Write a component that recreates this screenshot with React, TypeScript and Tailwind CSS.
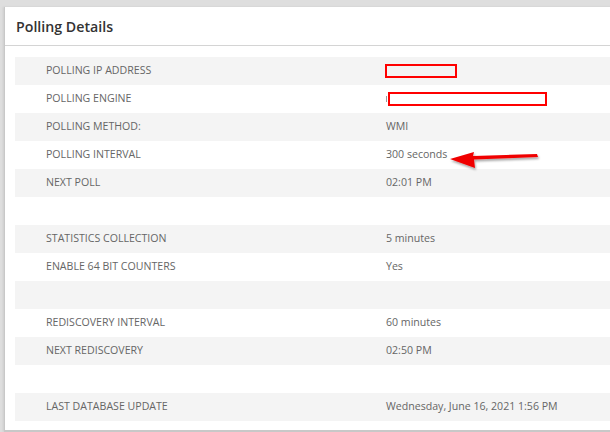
import React from 'react';

type Row = { label: string; value?: React.ReactNode };

const RedBox: React.FC<{ w: number; offset?: number }> = ({ w, offset = 0 }) => (
  <span className="relative inline-block h-[14px]" style={{ width: w, marginLeft: offset }}>
    <span className="absolute inset-0 border-2 border-[#ff0000]" />
  </span>
);

const Arrow: React.FC = () => (
  <svg className="absolute left-[444px] top-[147px]" width="100" height="26" viewBox="0 0 100 26">
    <defs>
      <filter id="sh" x="-10%" y="-30%" width="120%" height="180%">
        <feDropShadow dx="1" dy="2" stdDeviation="1.2" floodColor="#000" floodOpacity="0.35" />
      </filter>
    </defs>
    <path
      d="M6 12 L30 5 L29 9 L93 7 L94 10 L30 12.5 L31 21 Z"
      fill="#f00000"
      filter="url(#sh)"
    />
  </svg>
);

const rows: Row[] = [
  { label: 'POLLING IP ADDRESS', value: <RedBox w={72} offset={-1} /> },
  {
    label: 'POLLING ENGINE',
    value: (
      <span className="flex items-center">
        <span className="inline-block h-[6px] w-[1px] bg-[#999]" />
        <RedBox w={159} offset={1} />
      </span>
    ),
  },
  { label: 'POLLING METHOD:', value: 'WMI' },
  { label: 'POLLING INTERVAL', value: '300 seconds' },
  { label: 'NEXT POLL', value: '02:01 PM' },
  { label: '' },
  { label: 'STATISTICS COLLECTION', value: '5 minutes' },
  { label: 'ENABLE 64 BIT COUNTERS', value: 'Yes' },
  { label: '' },
  { label: 'REDISCOVERY INTERVAL', value: '60 minutes' },
  { label: 'NEXT REDISCOVERY', value: '02:50 PM' },
  { label: '' },
  { label: 'LAST DATABASE UPDATE', value: 'Wednesday, June 16, 2021 1:56 PM' },
];

export default function App() {
  return (
    <div
      className="relative h-[432px] w-[610px] overflow-hidden bg-[#dedede] pt-[7px] pl-[4px]"
      style={{ fontFamily: '"Open Sans", "Noto Sans", sans-serif' }}
    >
      <div className="w-[640px] border-b-2 border-l border-[#c8c8c8] bg-white pb-[9px] shadow-[-1px_0_2px_rgba(0,0,0,0.08)]">
        <div className="flex h-[39px] items-center border-b border-[#d4d4d4] pl-[11px] pt-[1px]">
          <h2 className="text-[14.2px] font-semibold text-[#333]">Polling Details</h2>
        </div>
        <div className="pl-[10px] pt-[11px]">
          {rows.map((r, i) => (
            <div
              key={i}
              className={`grid h-[28px] grid-cols-[371px_1fr] items-center text-[10.6px] text-[#666] ${
                i % 2 === 0 ? 'bg-[#f4f4f4]' : 'bg-white'
              }`}
            >
              <div className="pl-[31px]">{r.label}</div>
              <div className="flex items-center">{r.value}</div>
            </div>
          ))}
        </div>
      </div>
      <Arrow />
    </div>
  );
}
